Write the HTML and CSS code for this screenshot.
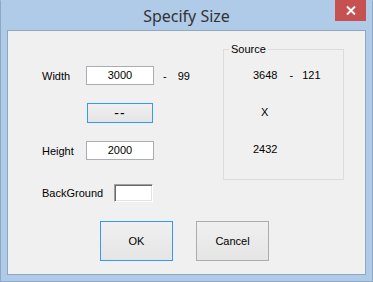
FILE: index.html
```html
<html>
<head>
  <meta charset="UTF-8">
  <meta name="viewport" content="width=device-width, initial-scale=1">
  <link rel="stylesheet" href="styles.css">
</head>
<body>
  <div class="window">
    <div class="titlebar">
      <span></span>
      <span class="title">Specify Size</span>
      <span class="close">
        <svg width="10" height="9" viewBox="0 0 10 9">
          <path d="M1 0.5 L9 8.5 M9 0.5 L1 8.5" stroke="#fff" stroke-width="2"/>
        </svg>
      </span>
    </div>

    <div class="client">
      <div class="main">
        <div class="form">
          <div class="row">
            <span class="label">Width</span>
            <div class="field">3000</div>
            <span class="dash range">-</span><span class="num">99</span>
          </div>
          <div class="row swap-row">
            <button class="btn small default">--</button>
          </div>
          <div class="row">
            <span class="label">Height</span>
            <div class="field">2000</div>
          </div>
          <div class="row bg-row">
            <span class="label wide">BackGround</span>
            <div class="swatch"></div>
          </div>
        </div>

        <div class="group">
          <span class="group-title">Source</span>
          <div class="line"><span>3648</span><span class="dash src">-</span><span class="num">121</span></div>
          <div class="line"><span class="times">X</span></div>
          <div class="line"><span>2432</span></div>
        </div>
      </div>

      <div class="actions">
        <button class="btn big default">OK</button>
        <button class="btn big">Cancel</button>
      </div>
    </div>
  </div>
</body>
</html>
```

FILE: styles.css
```css
body {
  margin: 0;
  padding: 0;
  background: #fff;
}

.window {
  width: 373px;
  height: 282px;
  box-sizing: border-box;
  background: #afcbe8;
  border: 1px solid #8ea7c3;
  border-top-color: #afcbe8;
  display: flex;
  flex-direction: column;
}

/* title bar */
.titlebar {
  height: 29px;
  display: grid;
  grid-template-columns: 1fr auto 1fr;
  align-items: start;
}
.title {
  font-family: "Noto Sans", "Open Sans", sans-serif;
  font-size: 16px;
  color: #333;
  line-height: 20px;
  padding-top: 5px;
}
.close {
  justify-self: end;
  margin: -1px 6px 0 0;
  width: 31px;
  height: 21px;
  background: #c75050;
  display: flex;
  align-items: center;
  justify-content: center;
}

/* client area */
.client {
  height: 245px;
  box-sizing: border-box;
  margin: 0 6px;
  border: 1px solid #8fa7c1;
  background: #f0f0f0;
  font-family: "Liberation Sans", Arial, sans-serif;
  font-size: 11px;
  color: #000;
}
.main {
  display: flex;
}
.form {
  width: 181px;
  padding: 35px 0 0 34px;
}
.row {
  display: flex;
  align-items: center;
  height: 19px;
}
.label {
  width: 44px;
}
.label.wide {
  width: 72px;
}
.field {
  width: 68px;
  height: 19px;
  box-sizing: border-box;
  border: 1px solid #abadb3;
  background: #fff;
  text-align: center;
  line-height: 17px;
}
.dash.range {
  margin-left: 9px;
}
.num {
  margin-left: 11px;
}
.swap-row {
  margin-top: 18px;
  height: 20px;
  padding-left: 45px;
}
.row + .row {
  margin-top: 18px;
}
.bg-row {
  height: 18px;
  margin-top: 24px !important;
}
.swatch {
  width: 39px;
  height: 18px;
  box-sizing: border-box;
  border: 1px solid;
  border-color: #a0a0a0 #fff #fff #a0a0a0;
  box-shadow: inset 1px 1px 0 #696969, inset -1px -1px 0 #e3e3e3;
  background: #fff;
}

/* buttons */
.btn {
  box-sizing: border-box;
  border: 1px solid #acacac;
  background: linear-gradient(#f0f0f0, #e5e5e5);
  font-family: "Liberation Sans", Arial, sans-serif;
  font-size: 11px;
  color: #000;
  padding: 0;
  margin: 0;
}
.btn.default {
  border-color: #3399ff;
}
.btn.small {
  width: 66px;
  height: 20px;
  letter-spacing: 1px;
  font-size: 14px;
  line-height: 18px;
}
.btn.big {
  width: 73px;
  height: 40px;
}
.actions {
  display: flex;
  gap: 23px;
  padding-left: 92px;
  margin-top: 19px;
}

/* source group box */
.group {
  margin-top: 18px;
  width: 121px;
  height: 131px;
  box-sizing: border-box;
  border: 1px solid #dcdcdc;
}
.group-title {
  display: block;
  width: fit-content;
  margin: -8px 0 0 5px;
  padding: 0 2px;
  line-height: 14px;
  background: #f0f0f0;
}
.line {
  height: 37px;
  line-height: 37px;
  padding-left: 29px;
}
.group .line:nth-child(2) {
  margin-top: 1px;
}
.times {
  margin-left: 8px;
}
.dash.src {
  margin-left: 12px;
}
.line .num {
  margin-left: 9px;
}
```
